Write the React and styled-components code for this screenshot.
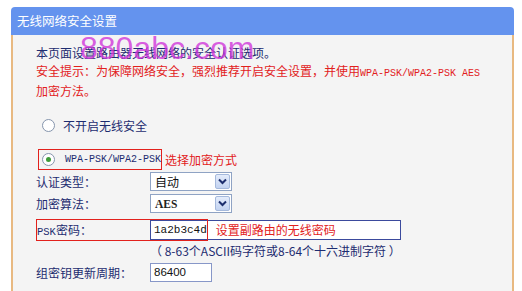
import styled, { createGlobalStyle } from "styled-components";

const Global = createGlobalStyle`
  html, body { margin: 0; padding: 0; background: #fff; overflow: hidden; }
  body { font-family: "Noto Sans CJK SC", "Noto Sans", sans-serif; font-size: 12px; }
`;

const navy = "#1d2c70";
const red = "#e2211c";

const Page = styled.div`
  position: relative;
  height: 291px;
  padding: 7px 8px 0 11px;
  box-sizing: border-box;
  display: flex;
  flex-direction: column;
`;

const Header = styled.div`
  height: 28px;
  line-height: 28px;
  padding-left: 6px;
  background: #6493ee;
  color: #fff;
  font-size: 12.5px;
  border-radius: 4px 4px 0 0;
`;

const Body = styled.div`
  flex: 1;
  background: #f4f4f4;
  border-left: 2px solid #e8b981;
  border-right: 2px solid #e8b981;
  padding: 9px 0 0 23px;
  display: flex;
  flex-direction: column;
  white-space: nowrap;
`;

const Para = styled.div`
  line-height: 17.5px;
  color: ${(p) => (p.$warn ? red : navy)};
`;

const Mono = styled.span`
  font-family: "Liberation Mono", monospace;
  font-size: ${(p) => p.$size || 10}px;
`;

const RadioRow = styled.div`
  display: flex;
  align-items: center;
  height: 22px;
  margin-top: ${(p) => p.$top}px;
  color: ${navy};
`;

const Boxed = styled.div`
  display: flex;
  align-items: center;
  height: 21px;
  margin-left: 2px;
  padding: 0 2px 0 3px;
  border: 1px solid ${red};
  box-sizing: border-box;
  width: 124px;
`;

const Radio = styled.span`
  width: 11px;
  height: 11px;
  border-radius: 50%;
  border: 1px solid #8595ad;
  background: #fff;
  margin: 0 ${(p) => p.$gap}px 0 ${(p) => p.$left}px;
  display: flex;
  align-items: center;
  justify-content: center;
  flex-shrink: 0;
  &::after {
    content: "";
    display: ${(p) => (p.$checked ? "block" : "none")};
    width: 5px;
    height: 5px;
    border-radius: 50%;
    background: #3e9c3a;
  }
`;

const Note = styled.span`
  color: ${red};
  margin-left: ${(p) => p.$left || 0}px;
`;

const Row = styled.div`
  position: relative;
  display: flex;
  align-items: center;
  height: ${(p) => p.$h || 22}px;
  margin-top: ${(p) => p.$top || 0}px;
  color: ${navy};
`;

const Label = styled.div`
  width: 114px;
  flex-shrink: 0;
  padding-left: ${(p) => p.$pad || 0}px;
  box-sizing: border-box;
`;

const Select = styled.div`
  width: 82px;
  height: 19px;
  box-sizing: border-box;
  border: 1px solid #8fa3c4;
  background: #fff;
  display: flex;
  align-items: center;
  justify-content: space-between;
  padding: 0 1px 0 4px;
  color: #111;
`;

const Serif = styled.span`
  font-family: "Liberation Serif", serif;
  font-size: 11.5px;
  font-weight: 600;
  color: #222;
`;

const DropBtn = styled.span`
  width: 15px;
  height: 15px;
  box-sizing: border-box;
  border: 1px solid #a5b9dc;
  border-radius: 2px;
  background: linear-gradient(#e4ecfb, #c3d3f1);
  display: flex;
  align-items: center;
  justify-content: center;
`;

const Field = styled.div`
  width: ${(p) => p.$w}px;
  height: ${(p) => p.$h || 20}px;
  box-sizing: border-box;
  border: 1px solid ${(p) => p.$border || "#3b4a9d"};
  background: #fff;
  display: flex;
  align-items: center;
  padding-left: 3px;
  color: #111;
`;

const Sans = styled.span`
  font-family: "Liberation Sans", Arial, sans-serif;
  font-size: 11.5px;
`;

const Mark = styled.div`
  position: absolute;
  left: ${(p) => p.$x}px;
  top: ${(p) => p.$y}px;
  width: ${(p) => p.$w}px;
  height: ${(p) => p.$h}px;
  border: 1.5px solid ${red};
  box-sizing: border-box;
  pointer-events: none;
`;

const Watermark = styled.div`
  position: absolute;
  left: 80px;
  top: 32px;
  font-family: "Liberation Sans", Arial, sans-serif;
  font-size: 32px;
  line-height: 32px;
  color: rgba(208, 52, 218, 0.78);
  pointer-events: none;
`;

const Chevron = () => (
  <svg width="9" height="7" viewBox="0 0 9 7">
    <path d="M1 1.5 L4.5 5 L8 1.5" fill="none" stroke="#1d2f6e" strokeWidth="2" />
  </svg>
);

const Dropdown = ({ children }) => (
  <Select>
    {children}
    <DropBtn>
      <Chevron />
    </DropBtn>
  </Select>
);

export default function App() {
  return (
    <>
      <Global />
      <Page>
        <Header>无线网络安全设置</Header>
        <Body>
          <Para>本页面设置路由器无线网络的安全认证选项。</Para>
          <Para $warn>
            安全提示：为保障网络安全，强烈推荐开启安全设置，并使用<Mono>WPA-PSK/WPA2-PSK AES</Mono>
            <br />
            加密方法。
          </Para>
          <RadioRow $top={15}>
            <Radio $left={6} $gap={8} />
            不开启无线安全
          </RadioRow>
          <RadioRow $top={12}>
            <Boxed>
              <Radio $left={0} $gap={10} $checked />
              <Mono>WPA-PSK/WPA2-PSK</Mono>
            </Boxed>
            <Note $left={3}>选择加密方式</Note>
          </RadioRow>
          <Row $top={0}>
            <Label>认证类型：</Label>
            <Dropdown>自动</Dropdown>
          </Row>
          <Row>
            <Label>加密算法：</Label>
            <Dropdown>
              <Serif>AES</Serif>
            </Dropdown>
          </Row>
          <Row $top={4}>
            <Label $pad={1}>
              <Mono $size={10.5}>PSK</Mono>密码：
            </Label>
            <Field $w={251}>
              <Mono $size={11}>1a2b3c4d</Mono>
              <Note $left={9}>设置副路由的无线密码</Note>
            </Field>
            <Mark $x={0} $y={0} $w={172} $h={22} />
          </Row>
          <Row $h={20}>
            <Label />
            （ 8-63个ASCII码字符或8-64个十六进制字符 ）
          </Row>
          <Row $h={23}>
            <Label>组密钥更新周期：</Label>
            <Field $w={62} $h={19} $border="#8797c8">
              <Sans>86400</Sans>
            </Field>
          </Row>
          <Row $top={7}>
            <Label />
            （单位为秒，最小值为30，不更新则为0）
          </Row>
        </Body>
        <Watermark>880abc.com</Watermark>
      </Page>
    </>
  );
}
